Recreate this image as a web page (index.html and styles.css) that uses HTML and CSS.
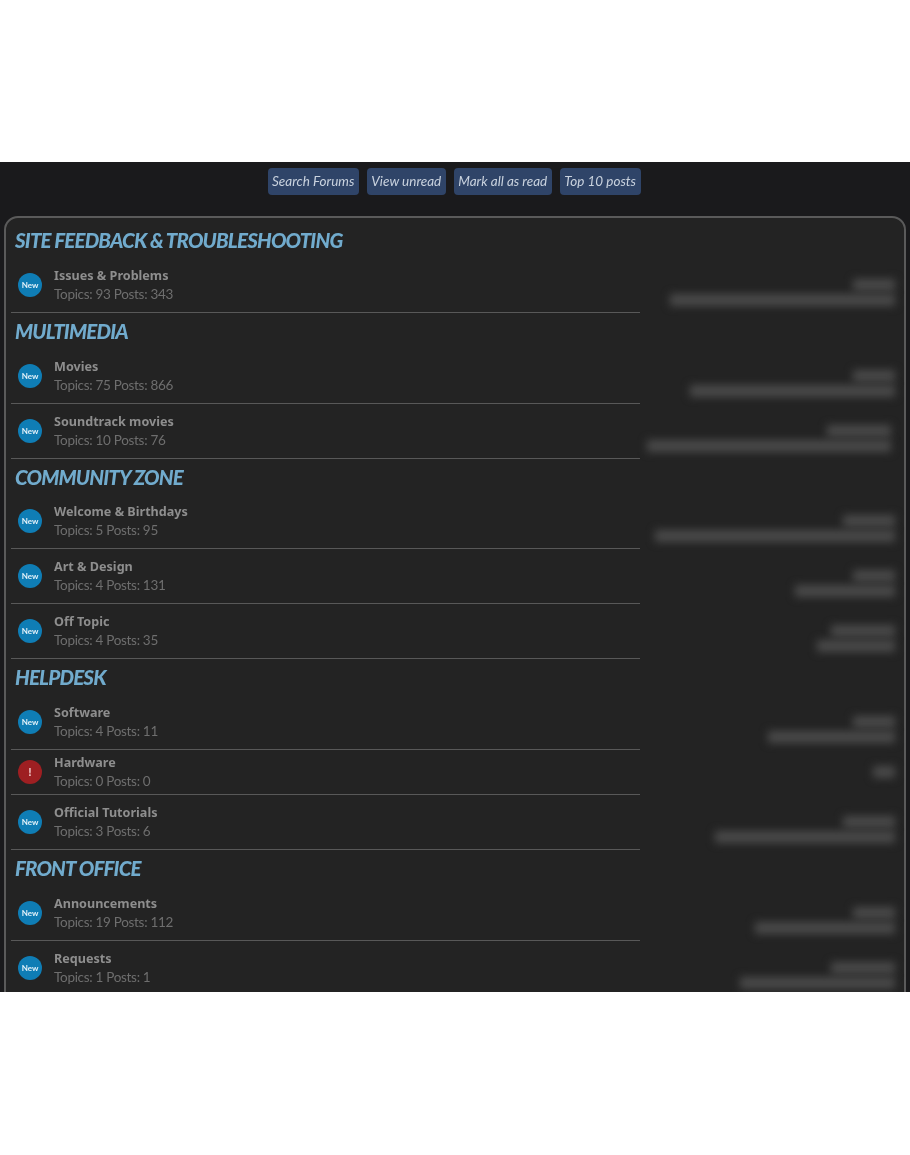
FILE: index.html
```html
<!DOCTYPE html>
<html lang="en">
<head>
<meta charset="utf-8">
<title>Forums</title>
<link rel="stylesheet" href="styles.css">
</head>
<body>
<main class="forum">
  <nav class="actions">
    <a class="btn">Search Forums</a>
    <a class="btn">View unread</a>
    <a class="btn">Mark all as read</a>
    <a class="btn">Top 10 posts</a>
  </nav>
  <section class="card">
    <h2 class="cat">SITE FEEDBACK &amp; TROUBLESHOOTING</h2>
    <div class="row">
      <div class="info"><span class="badge">New</span><div><div class="name">Issues &amp; Problems</div><div class="stats">Topics: 93 Posts: 343</div></div></div>
      <div class="last"><i class="bar t42"></i><i class="bar b225"></i></div>
    </div>
    <h2 class="cat">MULTIMEDIA</h2>
    <div class="row">
      <div class="info"><span class="badge">New</span><div><div class="name">Movies</div><div class="stats">Topics: 75 Posts: 866</div></div></div>
      <div class="last"><i class="bar t42"></i><i class="bar b205"></i></div>
    </div>
    <div class="row">
      <div class="info"><span class="badge">New</span><div><div class="name">Soundtrack movies</div><div class="stats">Topics: 10 Posts: 76</div></div></div>
      <div class="last"><i class="bar t64 in"></i><i class="bar b244 in"></i></div>
    </div>
    <h2 class="cat tight">COMMUNITY ZONE</h2>
    <div class="row">
      <div class="info"><span class="badge">New</span><div><div class="name">Welcome &amp; Birthdays</div><div class="stats">Topics: 5 Posts: 95</div></div></div>
      <div class="last"><i class="bar t52"></i><i class="bar b240"></i></div>
    </div>
    <div class="row">
      <div class="info"><span class="badge">New</span><div><div class="name">Art &amp; Design</div><div class="stats">Topics: 4 Posts: 131</div></div></div>
      <div class="last"><i class="bar t42"></i><i class="bar b100"></i></div>
    </div>
    <div class="row">
      <div class="info"><span class="badge">New</span><div><div class="name">Off Topic</div><div class="stats">Topics: 4 Posts: 35</div></div></div>
      <div class="last"><i class="bar t64"></i><i class="bar b78"></i></div>
    </div>
    <h2 class="cat">HELPDESK</h2>
    <div class="row">
      <div class="info"><span class="badge">New</span><div><div class="name">Software</div><div class="stats">Topics: 4 Posts: 11</div></div></div>
      <div class="last"><i class="bar t42"></i><i class="bar b127"></i></div>
    </div>
    <div class="row">
      <div class="info"><span class="badge alert">!</span><div><div class="name">Hardware</div><div class="stats">Topics: 0 Posts: 0</div></div></div>
      <div class="last solo"><i class="bar t22"></i></div>
    </div>
    <div class="row">
      <div class="info"><span class="badge">New</span><div><div class="name">Official Tutorials</div><div class="stats">Topics: 3 Posts: 6</div></div></div>
      <div class="last"><i class="bar t52"></i><i class="bar b180"></i></div>
    </div>
    <h2 class="cat">FRONT OFFICE</h2>
    <div class="row">
      <div class="info"><span class="badge">New</span><div><div class="name">Announcements</div><div class="stats">Topics: 19 Posts: 112</div></div></div>
      <div class="last"><i class="bar t42"></i><i class="bar b140"></i></div>
    </div>
    <div class="row">
      <div class="info"><span class="badge">New</span><div><div class="name">Requests</div><div class="stats">Topics: 1 Posts: 1</div></div></div>
      <div class="last"><i class="bar t64"></i><i class="bar b155"></i></div>
    </div>
  </section>
</main>
</body>
</html>
```
FILE: styles.css
```css
* { box-sizing: border-box; }
html, body { margin: 0; background: #fff; }
body { padding-top: 162px; height: 1155px; overflow: hidden; font-family: "Lato", "Liberation Sans", sans-serif; }
.forum { height: 830px; background: #1a1a1c; overflow: hidden; padding: 6px 4px 0; filter: blur(0.5px); }
.actions { display: flex; justify-content: center; gap: 8px; height: 48px; padding-right: 2px; }
.btn { height: 27px; line-height: 27px; padding: 0 4.5px; background: #2f4468; border-radius: 4px; color: #c9d2de; font-size: 13.5px; font-style: italic; white-space: nowrap; }
.card { height: 900px; background: #232323; border: 2px solid #5a5a5a; border-radius: 14px; padding: 4px 0 0; }
.cat { margin: 0; height: 36px; line-height: 37px; padding-left: 9px; font-size: 20.5px; font-weight: 900; font-style: italic; letter-spacing: -0.83px; color: #71abcd; }
.cat.tight { height: 35px; }
.row { display: flex; }
.info { flex: 0 0 629px; margin-left: 5px; padding-left: 7px; display: flex; align-items: center; gap: 12px; border-bottom: 1px solid #585858; }
.badge { flex: none; width: 24px; height: 24px; margin-top: -1px; border-radius: 50%; background: #0f7db5; color: #e6f3fa; font-size: 8px; font-weight: 700; line-height: 24px; text-align: center; }
.badge.alert { background: #9e1f22; color: #f0c8c8; font-size: 12px; }
.name { font-family: "Noto Sans", sans-serif; font-size: 12.6px; font-weight: 700; line-height: 18px; color: #8e8e8e; }
.stats { font-size: 13.5px; letter-spacing: -0.3px; line-height: 18px; color: #6e6e6e; }
.last { flex: 1; display: flex; flex-direction: column; align-items: flex-end; gap: 3px; padding: 21px 9px 7px 0; }
.last.solo { padding: 16px 9px 17px 0; }
.bar { display: block; height: 12px; background: #4a4a4a; filter: blur(4px); }
.bar.in { margin-right: 4px; }
.t22 { width: 22px; } .t42 { width: 42px; } .t52 { width: 52px; } .t64 { width: 64px; }
.b78 { width: 78px; } .b100 { width: 100px; } .b127 { width: 127px; } .b140 { width: 140px; } .b155 { width: 155px; }
.b180 { width: 180px; } .b205 { width: 205px; } .b225 { width: 225px; } .b240 { width: 240px; } .b244 { width: 244px; }
```
